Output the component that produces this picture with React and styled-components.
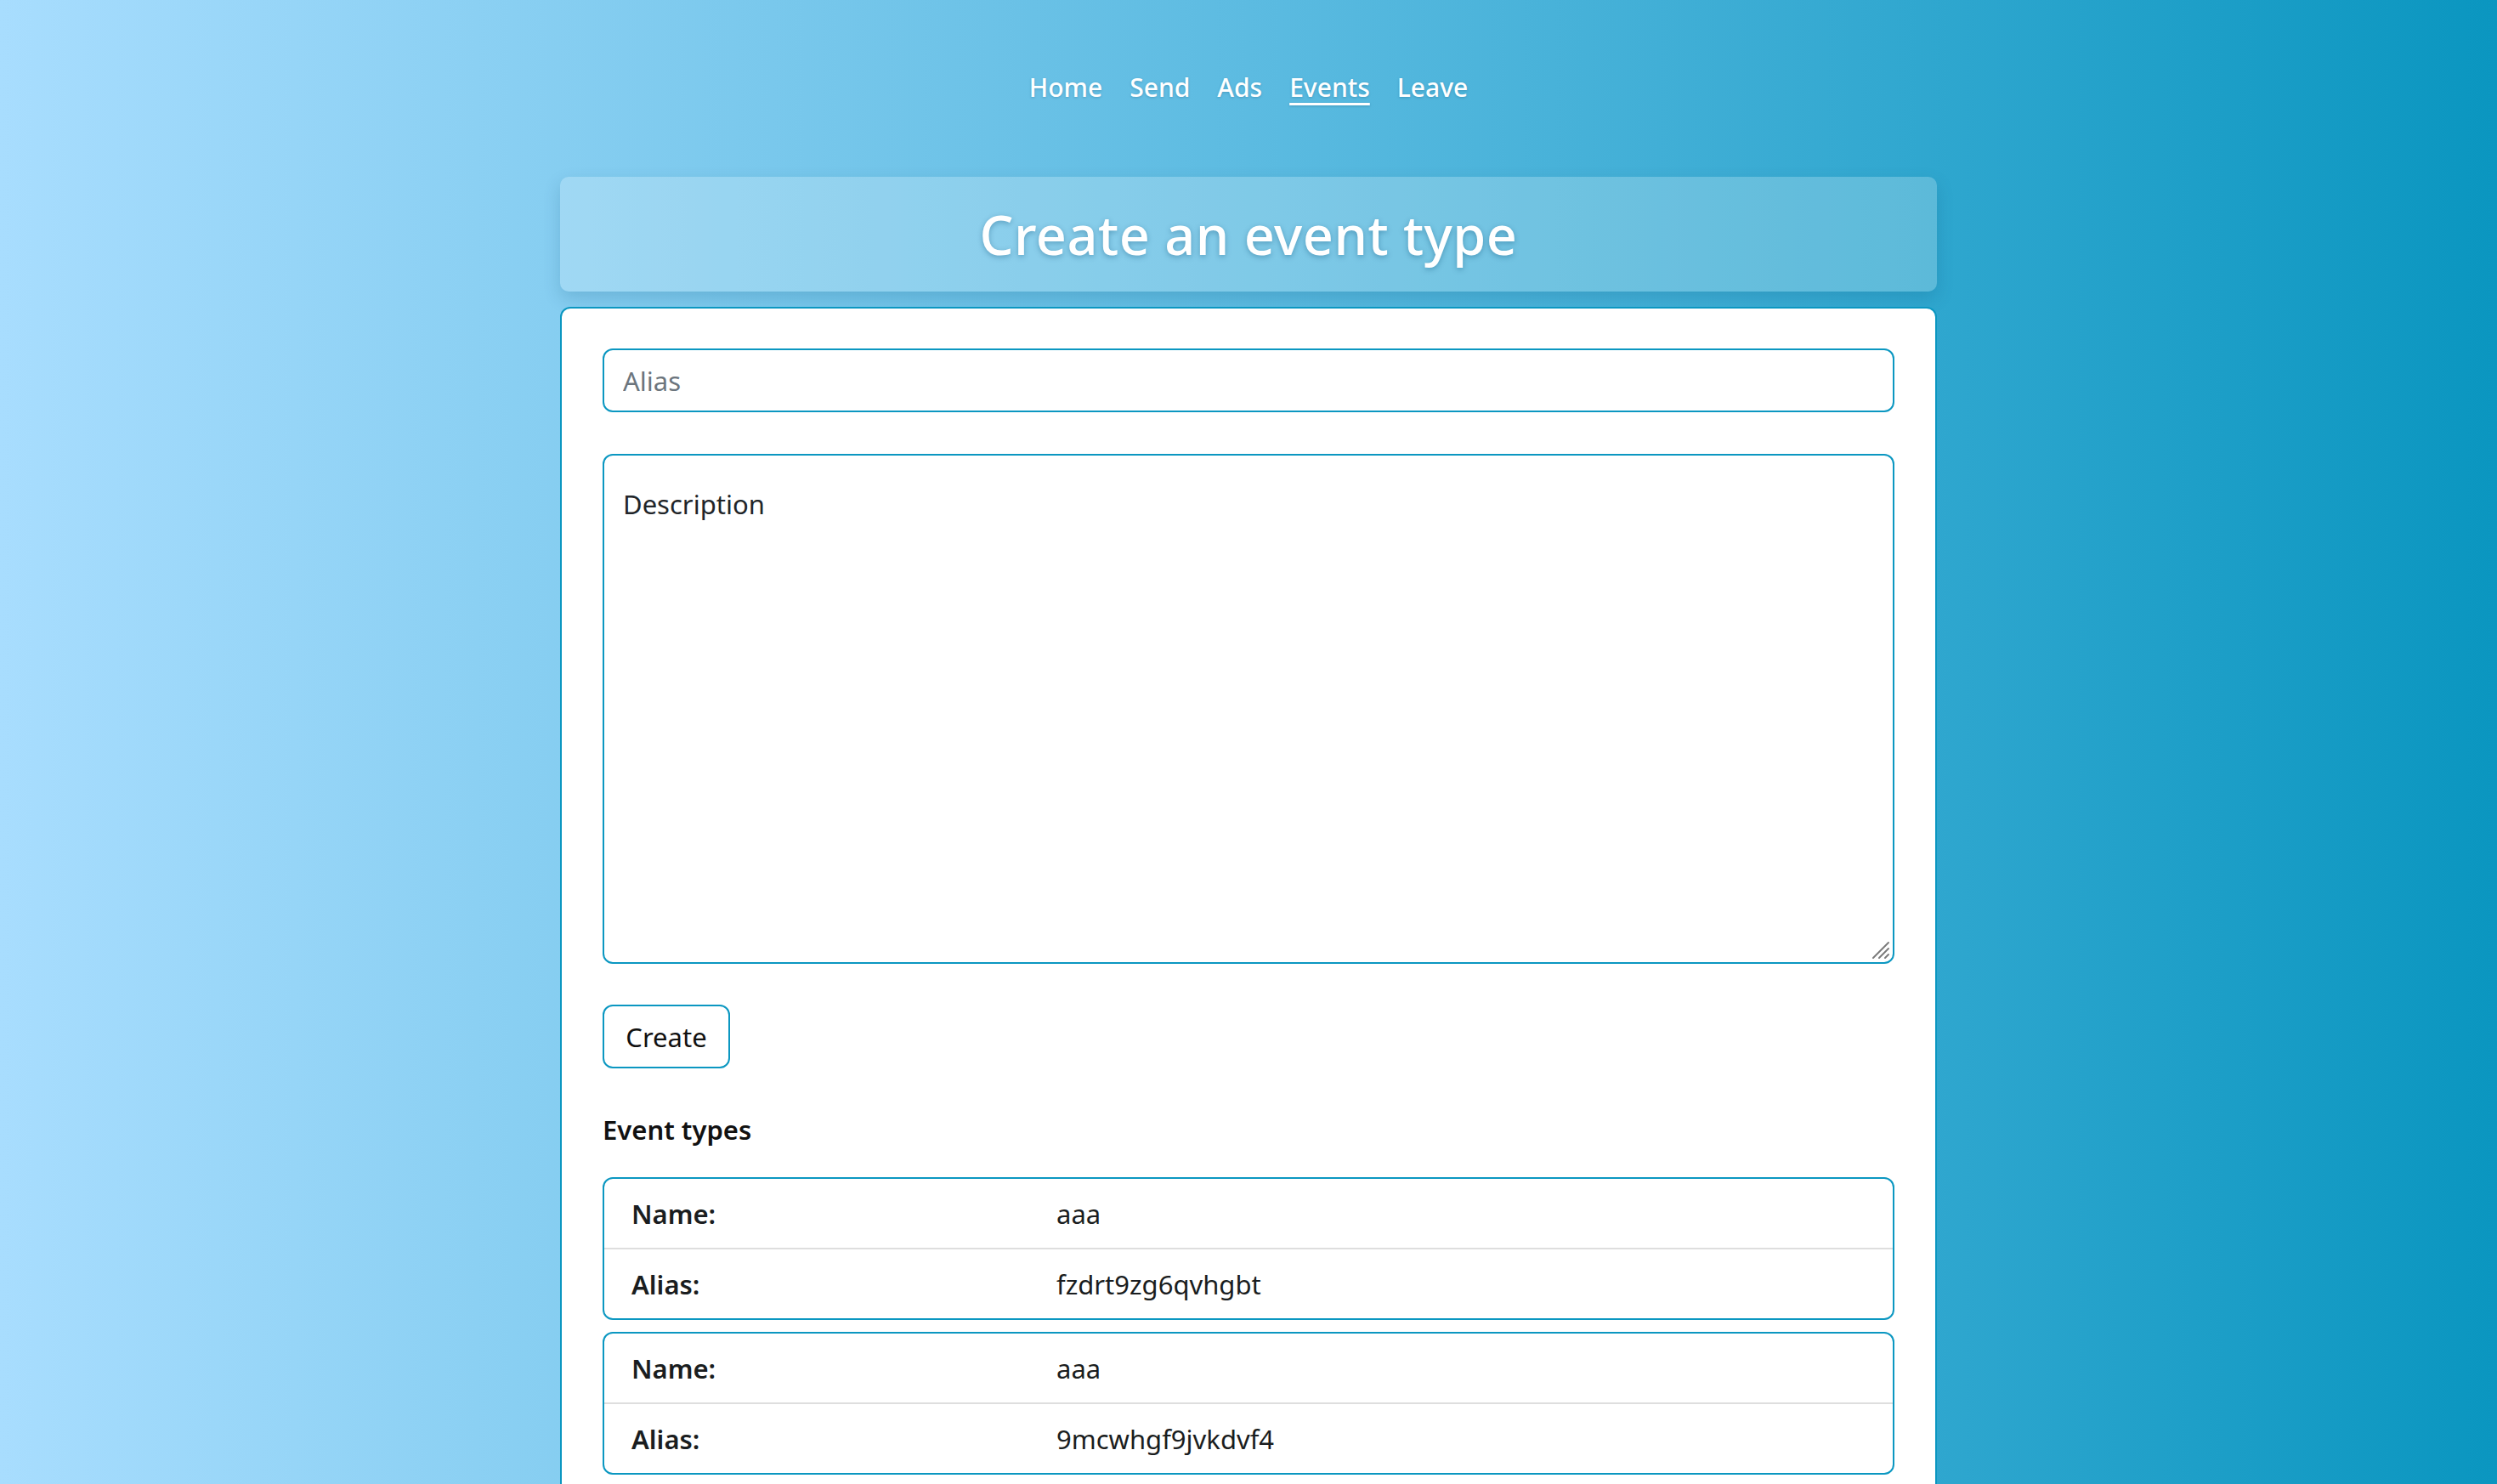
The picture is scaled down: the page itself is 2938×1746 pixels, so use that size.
import React from 'react'
import styled, { createGlobalStyle } from 'styled-components'

const GlobalStyle = createGlobalStyle`
  html, body {
    margin: 0;
    padding: 0;
  }
  body {
    min-height: 100vh;
    background: linear-gradient(to right, #a8ddfe 0%, #5cbbe1 50%, #0a96c0 100%);
    font-family: "Noto Sans", "Open Sans", sans-serif;
    color: #212529;
  }
`

const Page = styled.div`
  min-height: 100vh;
  display: flex;
  flex-direction: column;
  align-items: center;
  overflow: hidden;
`

const Nav = styled.nav`
  display: flex;
  gap: 32px;
  margin-top: 78px;
`

const NavLink = styled.a`
  color: #fff;
  font-size: 30px;
  font-weight: 500;
  line-height: 50px;
  text-decoration: ${p => (p.$active ? 'underline' : 'none')};
  text-underline-offset: 7px;
  text-decoration-thickness: 3px;
  text-shadow: 0 1px 3px rgba(0, 60, 90, 0.25);
  cursor: pointer;
`

const Wrap = styled.div`
  width: 1620px;
  margin-top: 80px;
  display: flex;
  flex-direction: column;
  gap: 18px;
`

const Header = styled.div`
  height: 135px;
  border-radius: 10px;
  background: rgba(255, 255, 255, 0.22);
  box-shadow: 0 8px 20px rgba(0, 70, 110, 0.18);
  display: flex;
  align-items: center;
  justify-content: center;
`

const Title = styled.h1`
  margin: 0;
  color: #fff;
  font-size: 63px;
  font-weight: 500;
  letter-spacing: 0.5px;
  text-shadow: 0 2px 6px rgba(0, 70, 110, 0.35);
`

const Card = styled.div`
  background: #fff;
  border: 2px solid #0b97c1;
  border-radius: 12px;
  padding: 47px 48px 60px;
  display: flex;
  flex-direction: column;
`

const fieldBase = `
  box-sizing: border-box;
  width: 100%;
  border: 2px solid #0b97c1;
  border-radius: 12px;
  font-family: "Noto Sans", "Open Sans", sans-serif;
  font-size: 31px;
  color: #212529;
  outline: none;
  background: #fff;
`

const Input = styled.input`
  ${fieldBase}
  height: 75px;
  padding: 0 22px;
  &::placeholder {
    color: #6c757d;
  }
`

const AreaWrap = styled.div`
  position: relative;
  margin-top: 49px;
  height: 600px;
`

const TextArea = styled.textarea`
  ${fieldBase}
  display: block;
  height: 100%;
  padding: 36px 22px 20px;
  resize: none;
  &::placeholder {
    color: #212529;
  }
`

const Grip = styled.svg`
  position: absolute;
  right: 5px;
  bottom: 5px;
  width: 22px;
  height: 22px;
  pointer-events: none;
`

const Button = styled.button`
  align-self: flex-start;
  margin-top: 48px;
  width: 150px;
  height: 75px;
  border: 2px solid #0b97c1;
  border-radius: 12px;
  background: #fff;
  font-family: "Noto Sans", "Open Sans", sans-serif;
  font-size: 31px;
  color: #111;
  cursor: pointer;
`

const SectionTitle = styled.h3`
  margin: 48px 0 32px;
  font-size: 31px;
  font-weight: 600;
  line-height: 48px;
  color: #111;
`

const List = styled.div`
  display: flex;
  flex-direction: column;
  gap: 14px;
`

const Entry = styled.div`
  border: 2px solid #0b97c1;
  border-radius: 12px;
  overflow: hidden;
`

const Row = styled.div`
  display: grid;
  grid-template-columns: 500px 1fr;
  height: 81px;
  align-items: center;
  padding-left: 32px;
  & + & {
    border-top: 2px solid #dedede;
  }
`

const Label = styled.span`
  font-size: 31px;
  font-weight: 600;
  color: #1a1d20;
`

const Value = styled.span`
  font-size: 31px;
  color: #1a1d20;
`

const eventTypes = [
  { name: 'aaa', alias: 'fzdrt9zg6qvhgbt' },
  { name: 'aaa', alias: '9mcwhgf9jvkdvf4' },
]

export default function App() {
  return (
    <Page>
      <GlobalStyle />
      <Nav>
        <NavLink>Home</NavLink>
        <NavLink>Send</NavLink>
        <NavLink>Ads</NavLink>
        <NavLink $active>Events</NavLink>
        <NavLink>Leave</NavLink>
      </Nav>
      <Wrap>
        <Header>
          <Title>Create an event type</Title>
        </Header>
        <Card>
          <Input placeholder="Alias" />
          <AreaWrap>
            <TextArea placeholder="Description" />
            <Grip viewBox="0 0 22 22">
              <g stroke="#7a7a7a" strokeWidth="2" strokeLinecap="round">
                <line x1="2" y1="20" x2="20" y2="2" />
                <line x1="9" y1="20" x2="20" y2="9" />
                <line x1="16" y1="20" x2="20" y2="16" />
              </g>
            </Grip>
          </AreaWrap>
          <Button>Create</Button>
          <SectionTitle>Event types</SectionTitle>
          <List>
            {eventTypes.map((e, i) => (
              <Entry key={i}>
                <Row>
                  <Label>Name:</Label>
                  <Value>{e.name}</Value>
                </Row>
                <Row>
                  <Label>Alias:</Label>
                  <Value>{e.alias}</Value>
                </Row>
              </Entry>
            ))}
          </List>
        </Card>
      </Wrap>
    </Page>
  )
}
